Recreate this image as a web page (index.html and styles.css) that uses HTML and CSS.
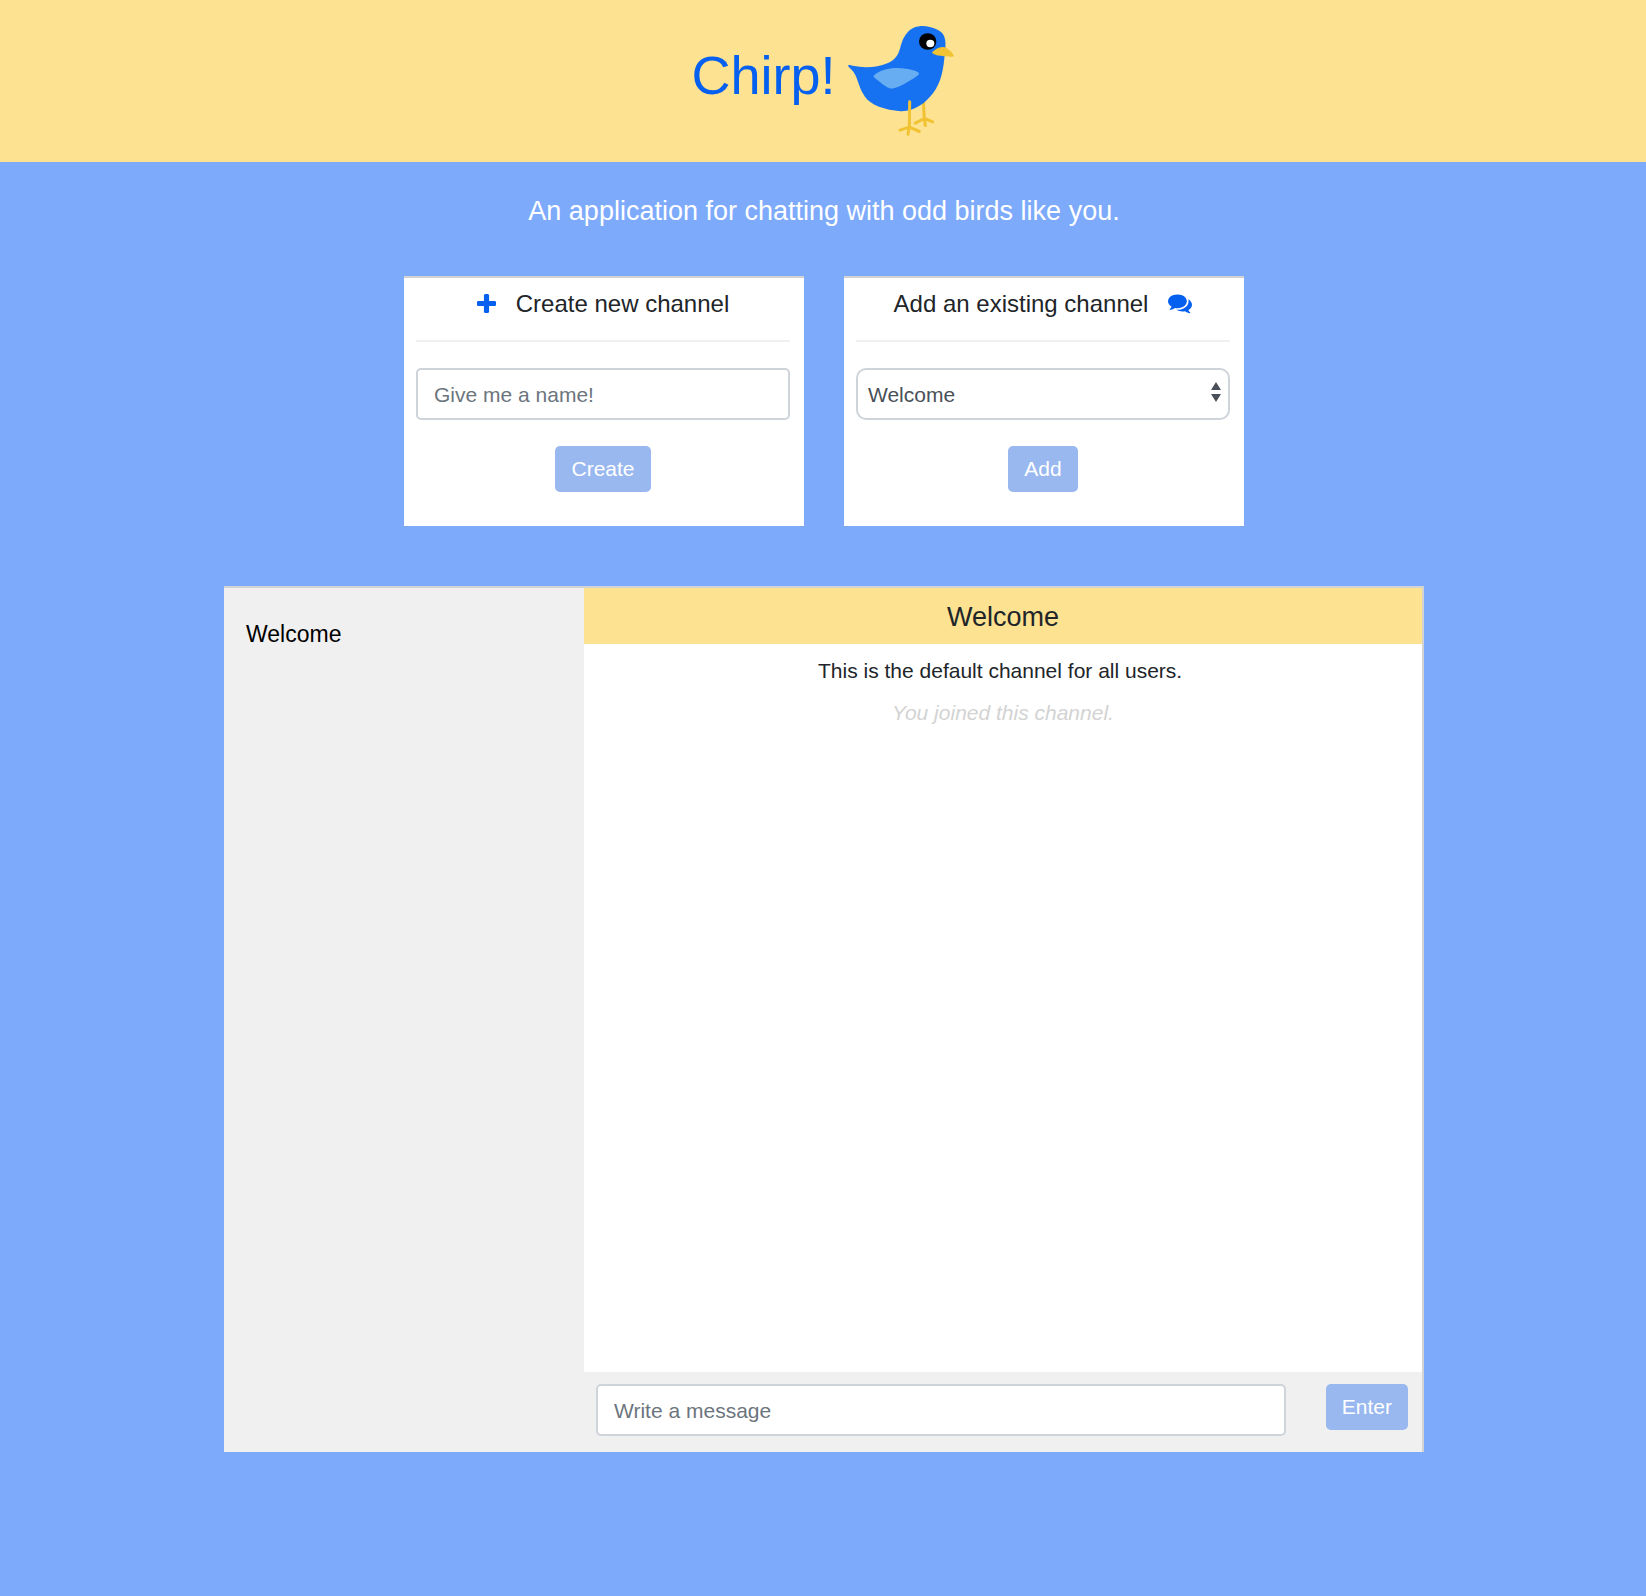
FILE: index.html
```html
<!DOCTYPE html>
<html lang="en">
<head>
  <meta charset="utf-8">
  <meta name="viewport" content="width=device-width, initial-scale=1">
  <title>Chirp!</title>
  <link rel="stylesheet" href="styles.css">
</head>
<body>
  <header class="banner">
    <h1 class="banner-title">Chirp!</h1>
    <svg class="bird" viewBox="24 32 321 333" aria-hidden="true">
      <g fill="none" stroke="#f1c232" stroke-width="9" stroke-linecap="round" stroke-linejoin="round">
        <path d="M250 255L253 312L256 332M226 325L253 311L278 321"/>
      </g>
      <path fill="#1772f2" d="M25 151C27 149 32 151 38 153C75 160 112 158 142 145C192 124 171 87 203 52C222 30 258 28 291 44C316 56 319 75 315 108C311 165 304 202 280 234C256 266 223 290 182 289C136 287 91 270 75 246C51 211 55 183 32 162C27 157 23 154 25 151Z"/>
      <path fill="#66adf2" d="M102 181C130 159 177 153 225 168C241 174 240 178 228 186C204 202 181 216 158 221C147 223 134 214 119 201C109 192 97 186 102 181Z"/>
      <ellipse cx="263" cy="80" rx="26" ry="25" fill="#000"/>
      <ellipse cx="271" cy="86" rx="12" ry="11" fill="#fff"/>
      <path fill="#f1c232" d="M276 112C288 102 299 94 313 97C326 101 337 113 342 123C341 127 334 125 314 124C298 123 279 120 276 112Z"/>
      <path fill="none" stroke="#f1c232" stroke-width="9" stroke-linecap="round" stroke-linejoin="round" d="M209 261L208 336L204 358M180 346L208 337L238 350"/>
    </svg>
  </header>

  <main class="page">
    <p class="tagline">An application for chatting with odd birds like you.</p>

    <div class="cards">
      <form class="card">
        <h2 class="card-title">
          <svg class="icon-plus" viewBox="192 128 1408 1408" aria-hidden="true"><path d="M1600 736v192q0 40-28 68t-68 28h-416v416q0 40-28 68t-68 28h-192q-40 0-68-28t-28-68v-416h-416q-40 0-68-28t-28-68v-192q0-40 28-68t68-28h416v-416q0-40 28-68t68-28h192q40 0 68 28t28 68v416h416q40 0 68 28t28 68z"/></svg>
          <label for="channel-name">Create new channel</label>
        </h2>
        <input class="field" id="channel-name" type="text" placeholder="Give me a name!">
        <button class="button" type="button">Create</button>
      </form>

      <form class="card">
        <h2 class="card-title">
          <label for="channel-list">Add an existing channel</label>
          <svg class="icon-chat" viewBox="0 0 1792 1792" aria-hidden="true"><path d="M1408 768q0 139-94 257t-256.500 186.500-353.500 68.500q-86 0-176-16-124 88-278 128-36 9-86 16h-3q-11 0-20.500-8t-11.500-21q-1-3-1-6.500t.5-6.500 2-6l2.500-5t3.500-5.500 4-5 4.500-5 4-4.500q5-6 23-25t26-29.500 22.500-29 25-38.500 20.500-44q-124-72-195-177t-71-224q0-139 94-257t256.500-186.500 353.500-68.500 353.500 68.500 256.500 186.500 94 257zm384 256q0 120-71 224.500t-195 176.500q10 24 20.500 44t25 38.500 22.500 29 26 29.500 23 25q1 1 4 4.500t4.500 5 4 5 3.500 5.500l2.500 5t2 6 .5 6.500-1 6.500q-3 14-13 22t-22 7q-50-7-86-16-154-40-278-128-90 16-176 16-271 0-472-132 58 4 88 4 161 0 309-45t264-129q125-92 192-212t67-254q0-77-23-152 129 71 204 178t75 230z"/></svg>
        </h2>
        <select class="field field-select" id="channel-list">
          <option>Welcome</option>
        </select>
        <button class="button" type="button">Add</button>
      </form>
    </div>

    <section class="chat">
      <nav class="channels" aria-label="Channels">
        <a class="channel" href="#welcome">Welcome</a>
      </nav>
      <div class="room" id="welcome">
        <h2 class="room-title">Welcome</h2>
        <div class="messages">
          <p class="message">This is the default channel for all users.&nbsp;</p>
          <p class="message notice">You joined this channel.</p>
        </div>
        <form class="composer">
          <input class="field composer-field" type="text" placeholder="Write a message" aria-label="Message">
          <button class="button" type="button">Enter</button>
        </form>
      </div>
    </section>
  </main>
</body>
</html>
```
FILE: styles.css
```css
* {
  box-sizing: border-box;
}

body {
  margin: 0;
  background: #7daafb;
  color: #212529;
  font: 21px/32px "Liberation Sans", Arial, Helvetica, sans-serif;
}

h1,
h2,
p {
  margin: 0;
  font-weight: 400;
}

.banner {
  display: flex;
  justify-content: center;
  align-items: center;
  gap: 12px;
  padding: 25px 16px;
  background: #fce291;
}

.banner-title {
  padding-bottom: 12px;
  color: #0560f0;
  font-size: 54px;
  line-height: 64px;
}

.bird {
  width: 107px;
  height: 112px;
}

.page {
  display: flex;
  flex-direction: column;
  align-items: center;
  padding: 28px 16px 144px 18px;
}

.tagline {
  margin-bottom: 44px;
  color: #fff;
  font-size: 27px;
  line-height: 42px;
  text-align: center;
}

.cards {
  display: flex;
  flex-wrap: wrap;
  justify-content: center;
  gap: 40px;
  margin-bottom: 60px;
}

.card {
  display: flex;
  flex-direction: column;
  align-items: center;
  width: 400px;
  padding: 10px 14px 34px 12px;
  border-top: 2px solid #d3d3d3;
  background: #fff;
}

.card-title {
  display: flex;
  justify-content: center;
  align-items: center;
  gap: 20px;
  width: 100%;
  margin-bottom: 26px;
  padding-bottom: 20px;
  border-bottom: 2px solid #f0f0f0;
  font-size: 24px;
}

.icon-plus,
.icon-chat {
  margin-bottom: 2px;
  fill: #0560f0;
}

.icon-plus {
  width: 19px;
  height: 19px;
}

.icon-chat {
  width: 24px;
  height: 24px;
}

.field {
  width: 100%;
  height: 52px;
  padding: 2px 16px 0;
  border: 2px solid #ced4da;
  border-radius: 5px;
  background: #fff;
  color: #495057;
  font: inherit;
}

.field::placeholder {
  color: #6c757d;
  opacity: 1;
}

.field-select {
  padding: 2px 10px 0;
  border-radius: 10px;
  appearance: none;
  background: #fff url("data:image/svg+xml,%3Csvg xmlns='http://www.w3.org/2000/svg' viewBox='0 0 10 20'%3E%3Cpath fill='%23495057' d='M5 0l5 8H0zM0 12h10l-5 8z'/%3E%3C/svg%3E") no-repeat right 7px top 12px / 10px 20px;
}

.button {
  height: 46px;
  padding: 0 16px;
  border: 0;
  border-radius: 5px;
  background: #99b8ef;
  color: #fff;
  font: inherit;
}

.card .button {
  margin-top: 26px;
}

.chat {
  display: grid;
  grid-template-columns: 360px 1fr;
  width: 100%;
  max-width: 1200px;
  border: 2px solid #d3d3d3;
  border-width: 2px 2px 0 0;
  background: #f0f0f0;
}

.channels {
  padding: 30px 22px;
}

.channel {
  color: #000;
  font-size: 23px;
  text-decoration: none;
}

.room {
  display: flex;
  flex-direction: column;
}

.room-title {
  padding-top: 2px;
  background: #fce291;
  font-size: 27px;
  line-height: 54px;
  text-align: center;
}

.messages {
  flex: 1;
  min-height: 728px;
  padding: 11px 10px;
  background: #fff;
  text-align: center;
}

.message {
  margin-bottom: 10px;
}

.notice {
  color: #d3d3d3;
  font-style: italic;
}

.composer {
  display: flex;
  gap: 40px;
  padding: 12px 14px 16px 12px;
}

.composer-field {
  flex: 1;
  min-width: 0;
}
```
